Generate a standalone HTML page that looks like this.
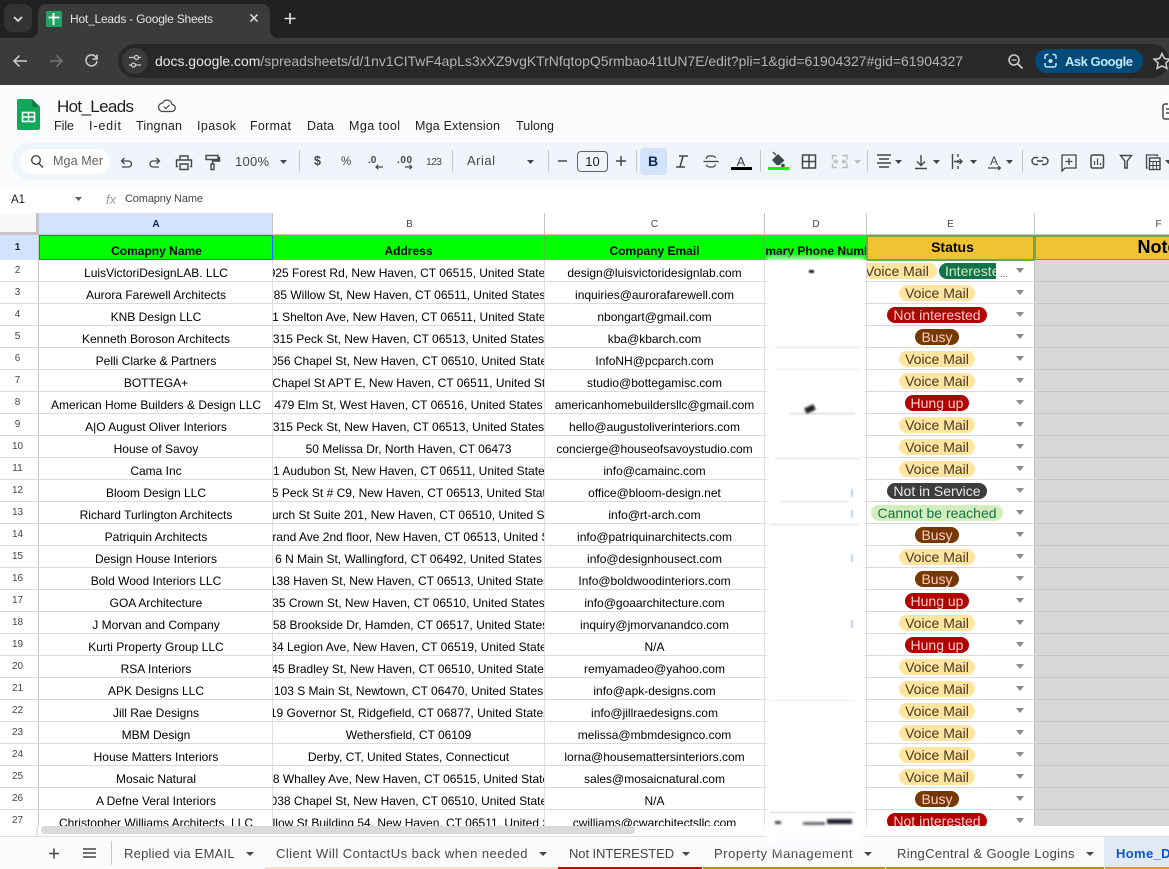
<!DOCTYPE html>
<html><head><meta charset="utf-8"><title>Hot_Leads - Google Sheets</title>
<style>
*{box-sizing:border-box}
html,body{margin:0;padding:0;width:1169px;height:869px;overflow:hidden;background:#fff;font-family:"Liberation Sans",Arial,sans-serif}
#top{position:absolute;left:0;top:0;display:block}
#top text{font-family:"Liberation Sans",Arial,sans-serif}
.ab{position:absolute}
#heads{position:absolute;left:0;top:212px;width:1169px;height:23px;background:#fff;border-top:1px solid #c4c7c5;font-size:10px;color:#444746}
#heads div{position:absolute;top:0;height:22px;line-height:23px;text-align:center;border-right:1px solid #c4c7c5;border-bottom:1px solid #c4c7c5}
#grid{position:absolute;left:0;top:235px;width:1169px;height:591px;overflow:hidden;font-size:12px;color:#000}
.h{position:absolute;left:0;top:0;width:1169px;height:25px;font-weight:bold}
.h div{position:absolute;top:0;height:25px;text-align:center;overflow:hidden;white-space:nowrap;background:#0f0;line-height:32px}
#rows{position:absolute;left:0;top:25px;width:1169px}
.r{position:relative;height:22px;width:1169px;border-bottom:1px solid #dadada}
.r>*{position:absolute;top:0;height:21px}
.n{left:0;width:39px;font-size:10px;color:#444746;text-align:center;line-height:22px;border-right:1px solid #c4c7c5;background:#fff;padding-right:3px}
.a,.b,.c,.d{display:flex;justify-content:center;overflow:hidden;white-space:nowrap;line-height:27px;border-right:1px solid #e0e0e0}
.a span,.b span,.c span{flex:none}
.a{left:39px;width:234px;padding-left:1px}.b{left:273px;width:272px}.c{left:545px;width:220px}
.d{left:765px;width:102px;border-right:1px solid #dadada}
.e{left:867px;width:168px;border-right:1px solid #c4c4c4}
.r>.f{left:1035px;width:134px;height:22px;background:#d7d7d7;border-bottom:1px solid #c4c4c4}
.p{position:absolute;left:0;width:140px;text-align:center;top:3px;font-size:14px;line-height:16px;white-space:nowrap}
.p b{display:inline-block;font-weight:normal;height:16px;padding:0 6px;border-radius:8px}
.v{background:#ffe5a0;color:#473821}.x{background:#b10202;color:#ffcfc9}.u{background:#753800;color:#ffcfc9}
.s{background:#3d3d3d;color:#e8eaed}.g{background:#d4edbc;color:#11734b}
.e i{position:absolute;left:149px;top:8px;width:0;height:0;border-left:4.5px solid transparent;border-right:4.5px solid transparent;border-top:5px solid #8a8a8a}
#tabs{position:absolute;left:0;top:836px;width:1169px;height:33px;background:#f9fbfd;border-top:1px solid #dadce0;font-size:13px;letter-spacing:.35px;color:#444746}
#tabs span{position:absolute;top:9px;white-space:nowrap;line-height:16px}
#tabs i{position:absolute;top:15px;width:0;height:0;border-left:4px solid transparent;border-right:4px solid transparent;border-top:4px solid #444746}
#tabs u{position:absolute;bottom:0;height:2px;display:block}
#scr{position:absolute;left:0;top:826px;width:1169px;height:10px;background:#fff}
</style></head><body>

<div id="heads">
<div style="left:0;width:39px;background:#f8f9fa;border-right:3px solid #c4c4c4;border-bottom:3px solid #c4c4c4;height:22px"></div>
<div style="left:39px;width:234px;background:#d3e3fd;font-weight:bold;color:#0b2a55;padding-left:1px">A</div>
<div style="left:273px;width:272px;padding-left:2px">B</div>
<div style="left:545px;width:220px">C</div>
<div style="left:765px;width:102px;padding-left:1px">D</div>
<div style="left:867px;width:168px">E</div>
<div style="left:1035px;width:248px">F</div>
</div>

<div id="grid">
<div class="h">
<div style="left:0;width:39px;background:#d3e3fd;font-size:10px;color:#0b2a55;line-height:25px;padding-right:3px;border-right:1px solid #c4c7c5">1</div>
<div style="left:39px;width:234px;border:1px solid #1a73e8;line-height:30px;padding-left:1px">Comapny Name</div>
<div style="left:273px;width:272px;border-right:1px solid #2fd42f">Address</div>
<div style="left:545px;width:220px;border-right:1px solid #2fd42f">Company Email</div>
<div style="left:765px;width:102px"><span style="position:absolute;left:-24px;width:150px">Primary Phone Number</span></div>
<div style="left:866px;width:169px;background:#f1c232;border:2px solid #6aa84f;font-size:14px;line-height:21px;height:26px;padding-left:4px">Status</div>
<div style="left:1034px;width:257px;background:#f1c232;border:2px solid #6aa84f;font-size:18px;line-height:21px;height:26px">Notes</div>
</div>
<div id="rows">
<div class="r"><div class="n">2</div><div class="a"><span>LuisVictoriDesignLAB. LLC</span></div><div class="b"><span style="margin-left:3px">925 Forest Rd, New Haven, CT 06515, United States</span></div><div class="c"><span>design@luisvictoridesignlab.com</span></div><div class="d"></div><div class="e"><div style="position:absolute;left:0;top:3px;width:70px;height:16px;background:#ffe5a0;border-radius:0 8px 8px 0;color:#473821;font-size:14px;line-height:16px;white-space:nowrap;overflow:hidden;text-indent:-2px">Voice Mail</div><div style="position:absolute;left:72px;top:3px;width:57px;height:16px;background:#11734b;border-radius:8px 0 0 8px;color:#d4edbc;font-size:14px;line-height:16px;white-space:nowrap;overflow:hidden;padding-left:6px">Interested</div><div style="position:absolute;left:133px;top:8px;font-size:9px;line-height:12px;color:#333">...</div><i></i></div><div class="f"></div></div>
<div class="r"><div class="n">3</div><div class="a"><span>Aurora Farewell Architects</span></div><div class="b"><span style="margin-left:2px">85 Willow St, New Haven, CT 06511, United States</span></div><div class="c"><span>inquiries@aurorafarewell.com</span></div><div class="d"></div><div class="e"><div class="p"><b class="v">Voice Mail</b></div><i></i></div><div class="f"></div></div>
<div class="r"><div class="n">4</div><div class="a"><span>KNB Design LLC</span></div><div class="b"><span>91 Shelton Ave, New Haven, CT 06511, United States</span></div><div class="c"><span>nbongart@gmail.com</span></div><div class="d"></div><div class="e"><div class="p"><b class="x">Not interested</b></div><i></i></div><div class="f"></div></div>
<div class="r"><div class="n">5</div><div class="a"><span>Kenneth Boroson Architects</span></div><div class="b"><span>315 Peck St, New Haven, CT 06513, United States</span></div><div class="c"><span>kba@kbarch.com</span></div><div class="d"></div><div class="e"><div class="p"><b class="u">Busy</b></div><i></i></div><div class="f"></div></div>
<div class="r"><div class="n">6</div><div class="a"><span>Pelli Clarke &amp; Partners</span></div><div class="b"><span>1056 Chapel St, New Haven, CT 06510, United States</span></div><div class="c"><span>InfoNH@pcparch.com</span></div><div class="d"></div><div class="e"><div class="p"><b class="v">Voice Mail</b></div><i></i></div><div class="f"></div></div>
<div class="r"><div class="n">7</div><div class="a"><span>BOTTEGA+</span></div><div class="b"><span>022 Chapel St APT E, New Haven, CT 06511, United States</span></div><div class="c"><span>studio@bottegamisc.com</span></div><div class="d"></div><div class="e"><div class="p"><b class="v">Voice Mail</b></div><i></i></div><div class="f"></div></div>
<div class="r"><div class="n">8</div><div class="a"><span>American Home Builders &amp; Design LLC</span></div><div class="b"><span>479 Elm St, West Haven, CT 06516, United States</span></div><div class="c"><span>americanhomebuildersllc@gmail.com</span></div><div class="d"></div><div class="e"><div class="p"><b class="x">Hung up</b></div><i></i></div><div class="f"></div></div>
<div class="r"><div class="n">9</div><div class="a"><span>A|O August Oliver Interiors</span></div><div class="b"><span>315 Peck St, New Haven, CT 06513, United States</span></div><div class="c"><span>hello@augustoliverinteriors.com</span></div><div class="d"></div><div class="e"><div class="p"><b class="v">Voice Mail</b></div><i></i></div><div class="f"></div></div>
<div class="r"><div class="n">10</div><div class="a"><span>House of Savoy</span></div><div class="b"><span>50 Melissa Dr, North Haven, CT 06473</span></div><div class="c"><span>concierge@houseofsavoystudio.com</span></div><div class="d"></div><div class="e"><div class="p"><b class="v">Voice Mail</b></div><i></i></div><div class="f"></div></div>
<div class="r"><div class="n">11</div><div class="a"><span>Cama Inc</span></div><div class="b"><span>51 Audubon St, New Haven, CT 06511, United States</span></div><div class="c"><span>info@camainc.com</span></div><div class="d"></div><div class="e"><div class="p"><b class="v">Voice Mail</b></div><i></i></div><div class="f"></div></div>
<div class="r"><div class="n">12</div><div class="a"><span>Bloom Design LLC</span></div><div class="b"><span>315 Peck St # C9, New Haven, CT 06513, United States</span></div><div class="c"><span>office@bloom-design.net</span></div><div class="d"></div><div class="e"><div class="p"><b class="s">Not in Service</b></div><i></i></div><div class="f"></div></div>
<div class="r"><div class="n">13</div><div class="a"><span>Richard Turlington Architects</span></div><div class="b"><span>5 Church St Suite 201, New Haven, CT 06510, United States</span></div><div class="c"><span>info@rt-arch.com</span></div><div class="d"></div><div class="e"><div class="p"><b class="g">Cannot be reached</b></div><i></i></div><div class="f"></div></div>
<div class="r"><div class="n">14</div><div class="a"><span>Patriquin Architects</span></div><div class="b"><span style="margin-right:2px">630 Grand Ave 2nd floor, New Haven, CT 06513, United States</span></div><div class="c"><span>info@patriquinarchitects.com</span></div><div class="d"></div><div class="e"><div class="p"><b class="u">Busy</b></div><i></i></div><div class="f"></div></div>
<div class="r"><div class="n">15</div><div class="a"><span>Design House Interiors</span></div><div class="b"><span>6 N Main St, Wallingford, CT 06492, United States</span></div><div class="c"><span>info@designhousect.com</span></div><div class="d"></div><div class="e"><div class="p"><b class="v">Voice Mail</b></div><i></i></div><div class="f"></div></div>
<div class="r"><div class="n">16</div><div class="a"><span>Bold Wood Interiors LLC</span></div><div class="b"><span style="margin-left:2px">138 Haven St, New Haven, CT 06513, United States</span></div><div class="c"><span>Info@boldwoodinteriors.com</span></div><div class="d"></div><div class="e"><div class="p"><b class="u">Busy</b></div><i></i></div><div class="f"></div></div>
<div class="r"><div class="n">17</div><div class="a"><span>GOA Architecture</span></div><div class="b"><span>35 Crown St, New Haven, CT 06510, United States</span></div><div class="c"><span>info@goaarchitecture.com</span></div><div class="d"></div><div class="e"><div class="p"><b class="x">Hung up</b></div><i></i></div><div class="f"></div></div>
<div class="r"><div class="n">18</div><div class="a"><span>J Morvan and Company</span></div><div class="b"><span style="margin-left:4px">58 Brookside Dr, Hamden, CT 06517, United States</span></div><div class="c"><span>inquiry@jmorvanandco.com</span></div><div class="d"></div><div class="e"><div class="p"><b class="v">Voice Mail</b></div><i></i></div><div class="f"></div></div>
<div class="r"><div class="n">19</div><div class="a"><span>Kurti Property Group LLC</span></div><div class="b"><span style="margin-left:6px">34 Legion Ave, New Haven, CT 06519, United States</span></div><div class="c"><span>N/A</span></div><div class="d"></div><div class="e"><div class="p"><b class="x">Hung up</b></div><i></i></div><div class="f"></div></div>
<div class="r"><div class="n">20</div><div class="a"><span>RSA Interiors</span></div><div class="b"><span style="margin-left:4px">45 Bradley St, New Haven, CT 06510, United States</span></div><div class="c"><span>remyamadeo@yahoo.com</span></div><div class="d"></div><div class="e"><div class="p"><b class="v">Voice Mail</b></div><i></i></div><div class="f"></div></div>
<div class="r"><div class="n">21</div><div class="a"><span>APK Designs LLC</span></div><div class="b"><span>103 S Main St, Newtown, CT 06470, United States</span></div><div class="c"><span>info@apk-designs.com</span></div><div class="d"></div><div class="e"><div class="p"><b class="v">Voice Mail</b></div><i></i></div><div class="f"></div></div>
<div class="r"><div class="n">22</div><div class="a"><span>Jill Rae Designs</span></div><div class="b"><span style="margin-left:2px">19 Governor St, Ridgefield, CT 06877, United States</span></div><div class="c"><span>info@jillraedesigns.com</span></div><div class="d"></div><div class="e"><div class="p"><b class="v">Voice Mail</b></div><i></i></div><div class="f"></div></div>
<div class="r"><div class="n">23</div><div class="a"><span>MBM Design</span></div><div class="b"><span>Wethersfield, CT 06109</span></div><div class="c"><span>melissa@mbmdesignco.com</span></div><div class="d"></div><div class="e"><div class="p"><b class="v">Voice Mail</b></div><i></i></div><div class="f"></div></div>
<div class="r"><div class="n">24</div><div class="a"><span>House Matters Interiors</span></div><div class="b"><span>Derby, CT, United States, Connecticut</span></div><div class="c"><span>lorna@housemattersinteriors.com</span></div><div class="d"></div><div class="e"><div class="p"><b class="v">Voice Mail</b></div><i></i></div><div class="f"></div></div>
<div class="r"><div class="n">25</div><div class="a"><span>Mosaic Natural</span></div><div class="b"><span style="margin-left:11px">8 Whalley Ave, New Haven, CT 06515, United States</span></div><div class="c"><span>sales@mosaicnatural.com</span></div><div class="d"></div><div class="e"><div class="p"><b class="v">Voice Mail</b></div><i></i></div><div class="f"></div></div>
<div class="r"><div class="n">26</div><div class="a"><span>A Defne Veral Interiors</span></div><div class="b"><span>1038 Chapel St, New Haven, CT 06510, United States</span></div><div class="c"><span>N/A</span></div><div class="d"></div><div class="e"><div class="p"><b class="u">Busy</b></div><i></i></div><div class="f"></div></div>
<div class="r"><div class="n">27</div><div class="a"><span>Christopher Williams Architects, LLC</span></div><div class="b"><span style="margin-left:8px">1 Willow St Building 54, New Haven, CT 06511, United States</span></div><div class="c"><span>cwilliams@cwarchitectsllc.com</span></div><div class="d"></div><div class="e"><div class="p"><b class="x">Not interested</b></div><i></i></div><div class="f"></div></div>
</div>
</div>

<div id="scr">
<div class="ab" style="left:36px;top:0;width:2px;height:10px;background:#e3e3e3"></div>
<div class="ab" style="left:41px;top:0;width:594px;height:8px;background:#dadada;border-radius:4px"></div>
</div>

<div id="tabs">
<span style="left:124px;letter-spacing:.23px">Replied via EMAIL</span><i style="left:246px"></i>
<span style="left:276px;letter-spacing:.45px">Client Will ContactUs back when needed</span><i style="left:539px"></i>
<span style="left:569px;letter-spacing:-.08px">Not INTERESTED</span><i style="left:682px"></i>
<span style="left:714px;letter-spacing:.55px">Property Management</span><i style="left:864px"></i>
<span style="left:897px">RingCentral &amp; Google Logins</span><i style="left:1086px"></i>
<div class="ab" style="left:1104px;top:0;width:65px;height:32px;background:#e1e9f7"></div>
<span style="left:1116px;color:#0b57d0;font-weight:bold">Home_Depot</span>
<u style="left:265px;width:293px;background:#f6e2cf"></u>
<u style="left:558px;width:144px;background:#a61c00"></u>
<u style="left:703px;width:182px;background:#bf9000"></u>
<u style="left:886px;width:218px;background:#bf9000"></u>
<u style="left:1105px;width:64px;background:#e69138"></u>
<svg class="ab" style="left:0;top:-1px" width="120" height="33"><path d="M49 17.500h10M54 12.500v10" stroke="#444746" stroke-width="1.500" fill="none"/><path d="M83 13h13M83 17h13M83 21h13" stroke="#444746" stroke-width="1.500" fill="none"/><path d="M111.500 5v24" stroke="#c7c7c7"/></svg>
</div>

<!-- blurred phone column -->
<div class="ab" style="left:767px;top:258px;width:97px;height:584px;background:#fff;filter:blur(2px)"></div>
<div class="ab" style="left:770px;top:256px;width:50px;height:3px;background:#7fe67f;filter:blur(1.500px)"></div>
<div class="ab" style="left:775px;top:347px;width:85px;height:1px;background:#ddd;filter:blur(.7px)"></div>
<div class="ab" style="left:775px;top:369px;width:85px;height:1px;background:#e6e6e6;filter:blur(.7px)"></div>
<div class="ab" style="left:790px;top:413px;width:65px;height:1px;background:#ccc;filter:blur(.7px)"></div>
<div class="ab" style="left:775px;top:458px;width:85px;height:1px;background:#e3d8e3;filter:blur(.7px)"></div>
<div class="ab" style="left:780px;top:501px;width:70px;height:1px;background:#ddd;filter:blur(.7px)"></div>
<div class="ab" style="left:770px;top:524px;width:90px;height:1px;background:#e3dcdc;filter:blur(.7px)"></div>
<div class="ab" style="left:770px;top:700px;width:85px;height:1px;background:#e6e6e6;filter:blur(.7px)"></div>
<div class="ab" style="left:770px;top:812px;width:85px;height:1px;background:#ccc;filter:blur(.7px)"></div>
<div class="ab" style="left:851px;top:489px;width:2px;height:8px;background:#bcd4f0;filter:blur(.6px)"></div>
<div class="ab" style="left:851px;top:510px;width:2px;height:8px;background:#bcd4f0;filter:blur(.6px)"></div>
<div class="ab" style="left:851px;top:554px;width:2px;height:8px;background:#bcd4f0;filter:blur(.6px)"></div>
<div class="ab" style="left:851px;top:620px;width:2px;height:8px;background:#bcd4f0;filter:blur(.6px)"></div>
<div class="ab" style="left:809px;top:270px;width:5px;height:3px;background:#222;filter:blur(.7px)"></div>
<div class="ab" style="left:805px;top:406px;width:10px;height:6px;background:#222;filter:blur(1px);transform:rotate(-25deg)"></div>
<div class="ab" style="left:775px;top:821px;width:6px;height:3px;background:#445;filter:blur(1px)"></div>
<div class="ab" style="left:803px;top:822px;width:22px;height:3px;background:#667;filter:blur(1px)"></div>
<div class="ab" style="left:827px;top:819px;width:25px;height:5px;background:#223;filter:blur(1px)"></div>
<div class="ab" style="left:773px;top:838px;width:66px;height:13px;background:rgba(249,251,253,.75);filter:blur(1.500px)"></div>

<!-- browser + sheets chrome -->
<svg id="top" width="1169" height="213" viewBox="0 0 1169 213">
<rect width="1169" height="38" fill="#202120"/>
<rect y="38" width="1169" height="47" fill="#3b3b3b"/>
<rect x="4" y="4" width="28" height="28" rx="8" fill="#333"/>
<path d="M14 17l4 4 4-4" stroke="#e3e3e3" stroke-width="1.600" fill="none"/>
<path d="M30 38a8 8 0 0 0 8-8V12a8 8 0 0 1 8-8h216a8 8 0 0 1 8 8v18a8 8 0 0 0 8 8z" fill="#3b3b3b"/>
<rect x="46" y="11" width="16" height="16" rx="1.500" fill="#1ea362"/>
<path d="M53.500 13v12M48.500 17.500h11" stroke="#fff" stroke-width="1.800"/>
<text x="70" y="23" font-size="12" fill="#e3e3e3" textLength="143">Hot_Leads - Google Sheets</text>
<path d="M250.500 14.500l7 7M257.500 14.500l-7 7" stroke="#e3e3e3" stroke-width="1.500"/>
<path d="M290 13v11M284.500 18.500h11" stroke="#e3e3e3" stroke-width="1.600"/>
<path d="M27 61H14M19.500 55.500L14 61l5.500 5.500" stroke="#d0d0d0" stroke-width="1.500" fill="none"/>
<path d="M62 61H50M56.500 55.500L62 61l-5.500 5.500" stroke="#777" stroke-width="1.500" fill="none"/>
<path d="M96.500 58a5.500 5.500 0 1 0 .5 3M97 54.500V59h-4.500" stroke="#d0d0d0" stroke-width="1.500" fill="none"/>
<rect x="118" y="44" width="1051" height="34" rx="17" fill="#282828"/>
<circle cx="135" cy="61" r="13" fill="#3b3b3b"/>
<path d="M129 57.500h5M139 57.500h2M129 65h2M136 65h5" stroke="#d0d0d0" stroke-width="1.300"/>
<circle cx="136.500" cy="57.500" r="2" fill="none" stroke="#d0d0d0" stroke-width="1.200"/>
<circle cx="133.500" cy="65" r="2" fill="none" stroke="#d0d0d0" stroke-width="1.200"/>
<text x="155" y="66" font-size="14" textLength="808" lengthAdjust="spacingAndGlyphs" fill="#b4b4b4"><tspan fill="#e8e8e8">docs.google.com</tspan>/spreadsheets/d/1nv1CITwF4apLs3xXZ9vgKTrNfqtopQ5rmbao41tUN7E/edit?pli=1&amp;gid=61904327#gid=61904327</text>
<circle cx="1014" cy="60" r="5" fill="none" stroke="#d0d0d0" stroke-width="1.500"/>
<path d="M1018 64l4.500 4.500" stroke="#d0d0d0" stroke-width="1.700"/><path d="M1011.500 60h5" stroke="#d0d0d0" stroke-width="1.200"/>
<rect x="1035" y="49" width="108" height="24" rx="12" fill="#004a77"/>
<path d="M1045 59v-2.500a2 2 0 0 1 2-2h1.500M1052.500 54.500h1.500a2 2 0 0 1 2 2V59M1056 63v2a2 2 0 0 1-2 2h-7a2 2 0 0 1-2-2v-2" stroke="#c2e7ff" stroke-width="1.500" fill="none"/>
<circle cx="1050.500" cy="61" r="2" fill="#c2e7ff"/>
<text x="1065" y="66" font-size="13" font-weight="bold" fill="#c2e7ff" textLength="68">Ask Google</text>
<path d="M1162 53.500l2.400 5 5.500.7-4 3.800 1 5.500-4.900-2.700-4.900 2.700 1-5.500-4-3.800 5.500-.7z" fill="none" stroke="#d0d0d0" stroke-width="1.500"/>

<rect y="85" width="1169" height="102" fill="#f9fbfd"/>
<path d="M19 99h13l8 8v21a2 2 0 0 1-2 2H19a2 2 0 0 1-2-2v-27a2 2 0 0 1 2-2z" fill="#0fa958"/>
<path d="M32 99l8 8h-6a2 2 0 0 1-2-2z" fill="#0b8043"/>
<rect x="22.500" y="112.500" width="12" height="9" fill="none" stroke="#fff" stroke-width="1.600"/>
<path d="M22.500 117h12M28.500 112.500v9" stroke="#fff" stroke-width="1.400"/>
<text x="57" y="112" font-size="17" fill="#1f1f1f" textLength="77">Hot_Leads</text>
<path d="M162 111.500h9.500a3.500 3.500 0 0 0 .5-7 5 5 0 0 0-9.500-1.500 4.300 4.300 0 0 0-.5 8.500z" fill="none" stroke="#444746" stroke-width="1.300"/>
<path d="M164 106.500l2 2 3.500-3.500" fill="none" stroke="#444746" stroke-width="1.200"/>
<g font-size="12.500" fill="#1f1f1f">
<text x="54" y="130" textLength="20">File</text>
<text x="89" y="130" textLength="32">I-edit</text>
<text x="136" y="130" textLength="46">Tingnan</text>
<text x="197" y="130" textLength="39">Ipasok</text>
<text x="250" y="130" textLength="41">Format</text>
<text x="307" y="130" textLength="27">Data</text>
<text x="349" y="130" textLength="51">Mga tool</text>
<text x="415" y="130" textLength="85">Mga Extension</text>
<text x="516" y="130" textLength="38">Tulong</text>
</g>
<path d="M1168 104h-3a2 2 0 0 0-2 2v11a2 2 0 0 0 2 2h4M1166 109h3M1166 113h3" fill="none" stroke="#444746" stroke-width="1.500"/>

<rect x="12" y="143" width="1180" height="37" rx="18" fill="#edf2fa" opacity=".8"/>
<rect x="20" y="149" width="90" height="25" rx="12.500" fill="#fff"/>
<circle cx="36" cy="160" r="4.300" fill="none" stroke="#444746" stroke-width="1.400"/><path d="M39 163.500l4 4" stroke="#444746" stroke-width="1.500"/>
<text x="53" y="165" font-size="12.500" fill="#5f6368" textLength="50">Mga Mer</text>
<g fill="none" stroke="#444746" stroke-width="1.300">
<path d="M122 167.500h6.500a3 3 0 0 0 0-6H122M124.500 158.500l-3 3 3 3" transform="translate(0 -.5)"/>
<path d="M159 167.500h-6a3 3 0 0 1 0-6h6.500M156.500 158.500l3 3-3 3" transform="translate(0 -.5)"/>
<path d="M180 160v-4h8v4M178 166.500h-1.500v-6.500h15v6.500H190M180 164h8v5.500h-8z" stroke-width="1.400"/>
<path d="M206 155.500h12v4h-12zM218 157.500h1.500v3.500h-7v3M211 164h3v5.500h-3z" stroke-width="1.400"/>
</g>
<text x="235" y="166" font-size="13" fill="#444746" textLength="34">100%</text>
<path d="M280 160h7l-3.500 4z" fill="#444746"/>
<path d="M299.500 150v22" stroke="#c7c7c7"/>
<text x="314" y="165" font-size="12.500" font-weight="bold" fill="#444746">$</text>
<text x="341" y="165" font-size="11.500" fill="#444746">%</text>
<text x="368" y="163" font-size="10" font-weight="bold" fill="#444746">.0</text>
<path d="M383 167h-7M378.300 164.800l-2.300 2.200 2.300 2.200" stroke="#444746" stroke-width="1.200" fill="none"/>
<text x="397" y="163" font-size="10" font-weight="bold" fill="#444746" textLength="15">.00</text>
<path d="M405 167h7M409.500 164.800l2.300 2.200-2.300 2.200" stroke="#444746" stroke-width="1.200" fill="none"/>
<text x="426" y="165" font-size="10.500" fill="#444746" textLength="16">123</text>
<path d="M452.500 150v22" stroke="#c7c7c7"/>
<text x="467" y="165" font-size="13" fill="#444746" textLength="28">Arial</text>
<path d="M527 160h7l-3.500 4z" fill="#444746"/>
<path d="M548.500 150v22" stroke="#c7c7c7"/>
<path d="M558 161h9" stroke="#444746" stroke-width="1.500"/>
<rect x="577.500" y="151.500" width="30" height="20" rx="3.500" fill="none" stroke="#5f6368"/>
<text x="592.500" y="166" font-size="13" fill="#1f1f1f" text-anchor="middle">10</text>
<path d="M616 161h10M621 156v10" stroke="#444746" stroke-width="1.500"/>
<path d="M636.500 150v22" stroke="#c7c7c7"/>
<rect x="640" y="148" width="27" height="27" rx="4" fill="#d3e3fd"/>
<text x="653" y="166" font-size="14" font-weight="bold" fill="#0b2a55" text-anchor="middle">B</text>
<path d="M679 156h9M676 167h9M683 156l-3 11" stroke="#444746" stroke-width="1.500" fill="none"/>
<path d="M703.500 161.500h15" stroke="#444746" stroke-width="1.300"/>
<path d="M706.500 159v-1a3 3 0 0 1 3-2h3a3 3 0 0 1 3 2M706.500 164.500a3 3 0 0 0 3 2.500h3a3 3 0 0 0 3-2.500" stroke="#444746" stroke-width="1.300" fill="none"/>
<text x="741" y="166" font-size="13" fill="#444746" text-anchor="middle">A</text>
<rect x="731" y="167" width="21" height="3" fill="#000"/>
<path d="M760.500 150v22" stroke="#c7c7c7"/>
<path d="M772 160l6-6 6.500 6.500-5 4.500h-3z" fill="#444746"/><path d="M773 152l3 3" stroke="#444746" stroke-width="1.300"/>
<circle cx="783" cy="165.500" r="1.800" fill="#444746"/>
<rect x="768" y="167" width="21" height="3" fill="#0f0"/>
<path d="M802.500 155h13v13h-13zM809 155v13M802.500 161.500h13" fill="none" stroke="#444746" stroke-width="1.500"/>
<g fill="none" stroke="#bdbdbd" stroke-width="1.400">
<path d="M837 155.500h-4.500v4M837 167.500h-4.500v-4M842 155.500h5v4M842 167.500h5v-4M833 161.500h4M835.500 159.500l2 2-2 2M847 161.500h-4M844.500 159.500l-2 2 2 2"/>
</g>
<path d="M854 160h7l-3.500 4z" fill="#bdbdbd"/>
<path d="M867.500 150v22" stroke="#c7c7c7"/>
<path d="M877 155h14M879 159h10M877 163h14M879 167h10" stroke="#444746" stroke-width="1.400" fill="none"/>
<path d="M895 160h7l-3.500 4z" fill="#444746"/>
<path d="M921 155v10M917 161.500l4 4 4-4M915 168.500h12" stroke="#444746" stroke-width="1.400" fill="none"/>
<path d="M933 160h7l-3.500 4z" fill="#444746"/>
<path d="M952.500 154v15M958 154v3M958 160v3M958 166v3M954 161.500h8M959.500 159l2.500 2.500-2.500 2.500" stroke="#444746" stroke-width="1.400" fill="none"/>
<path d="M970 160h7l-3.500 4z" fill="#444746"/>
<text x="994" y="165" font-size="12" fill="#444746" text-anchor="middle">A</text>
<path d="M988 168h12M998 166l2.500 2-2.500 2" stroke="#444746" stroke-width="1.200" fill="none"/>
<path d="M1006 160h7l-3.500 4z" fill="#444746"/>
<path d="M1022.500 150v22" stroke="#c7c7c7"/>
<path d="M1038 157.500h-2.500a3.500 3.500 0 0 0 0 7h2.500M1042 157.500h2.500a3.500 3.500 0 0 1 0 7H1042M1037 161h6" stroke="#444746" stroke-width="1.400" fill="none"/>
<path d="M1062 155h14v13h-11l-3 3zM1069 158v7M1065.500 161.500h7" stroke="#444746" stroke-width="1.300" fill="none"/>
<rect x="1091" y="155" width="12.500" height="13" rx="1.500" fill="none" stroke="#444746" stroke-width="1.500"/>
<path d="M1094.500 161v4M1097.500 158.500v6.500M1100.500 163v2" stroke="#444746" stroke-width="1.200"/>
<path d="M1120.500 155.500h11l-4.300 5.500v7h-2.400v-7z" fill="none" stroke="#444746" stroke-width="1.400"/>
<path d="M1148 168h-1.500v-13h11v1.500" fill="none" stroke="#444746" stroke-width="1.300"/>
<rect x="1149.500" y="158" width="10.500" height="11.500" fill="none" stroke="#444746" stroke-width="1.400"/>
<path d="M1149.500 161.500h10.500M1149.500 165.500h10.500M1153 161.500v8M1156.500 161.500v8" stroke="#444746" stroke-width="1"/>
<path d="M1165 160h7l-3.500 4z" fill="#444746"/>

<rect y="187" width="1169" height="26" fill="#fff"/>
<text x="11" y="203" font-size="11.500" fill="#1f1f1f">A1</text>
<path d="M75 197h7l-3.500 4z" fill="#5f6368"/>
<text x="106" y="204" font-size="13" font-family="Liberation Serif" font-style="italic" fill="#9a9a9a">fx</text>
<text x="125" y="202" font-size="11" fill="#444746" textLength="78">Comapny Name</text>
</svg>
</body></html>
